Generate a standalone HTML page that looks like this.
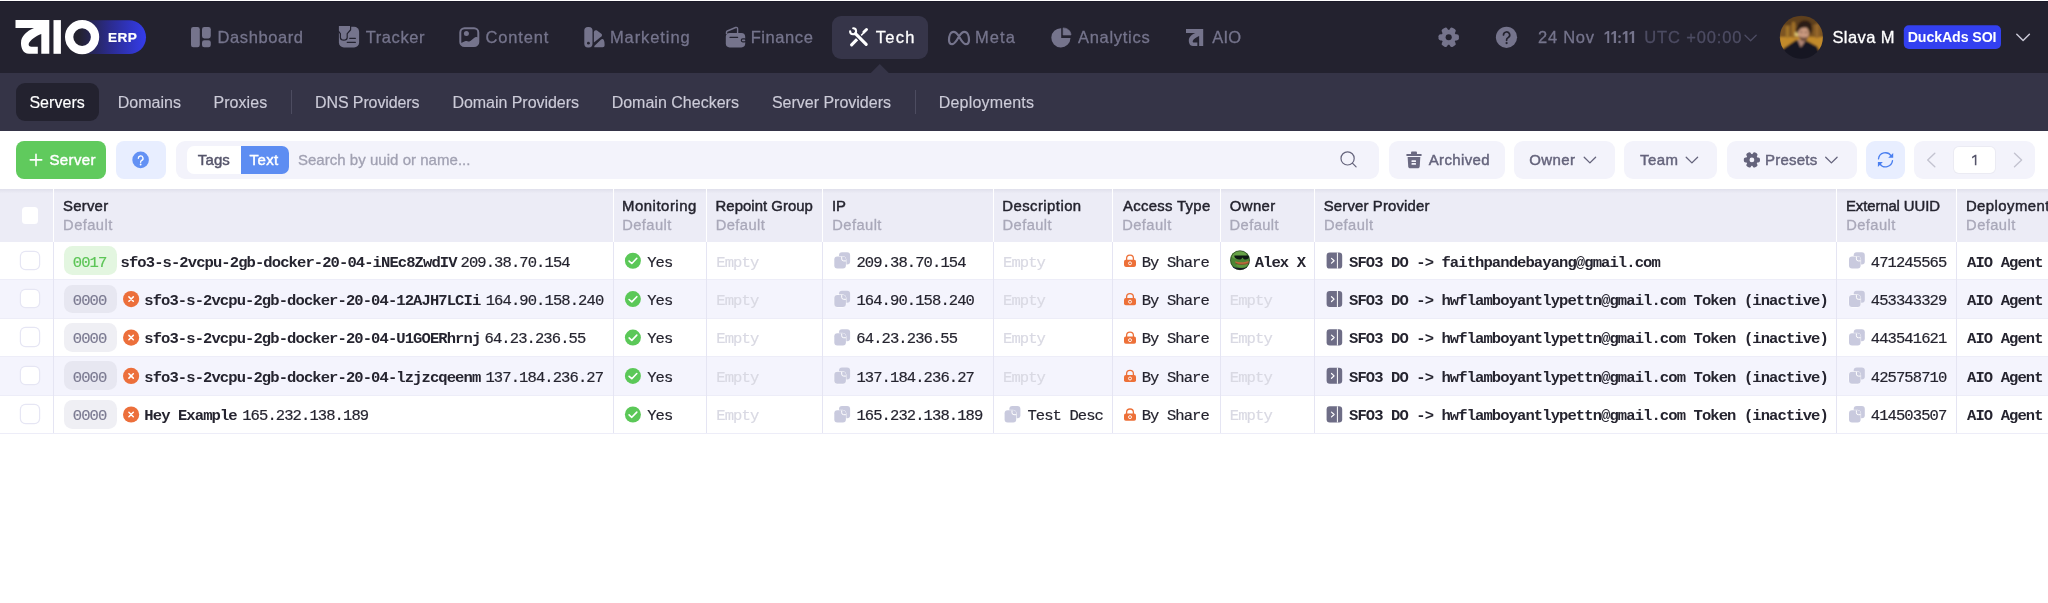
<!DOCTYPE html>
<html><head><meta charset="utf-8"><title>AIO ERP - Servers</title>
<style>
html,body{margin:0;padding:0;background:#fff;overflow:hidden}
#p{position:relative;width:2048px;height:603px;overflow:hidden;background:#fff;font-family:'Liberation Sans', sans-serif;will-change:transform}
#p>div,#p>span,#p>svg{position:absolute}
#p>span{white-space:pre;display:block}
</style></head><body><div id="p">
<div style="left:0px;top:0px;width:2048px;height:73px;background:#23222f;border-radius:0px;"></div>
<div style="left:0px;top:73px;width:2048px;height:57.6px;background:#353447;border-radius:0px;"></div>
<div style="left:0px;top:0px;width:2048px;height:2px;background:linear-gradient(#ffffff 0,#ffffff .75px,#1a1928 1.2px,#1a1928 1.8px,#23222f 2px);border-radius:0px;"></div>
<div style="left:832.2px;top:15.9px;width:95.5px;height:42.7px;background:#363549;border-radius:9px;"></div>
<div style="left:15.9px;top:82.9px;width:83px;height:38.2px;background:#23222f;border-radius:9px;"></div>
<div style="left:291px;top:90px;width:1px;height:24px;background:#4d4c60;border-radius:0px;"></div>
<div style="left:915px;top:90px;width:1px;height:24px;background:#4d4c60;border-radius:0px;"></div>
<div style="left:16px;top:141px;width:89.8px;height:37.8px;background:#60ca5d;border-radius:8px;"></div>
<div style="left:115.6px;top:141px;width:50.4px;height:37.8px;background:#e8eeff;border-radius:8px;"></div>
<div style="left:175.8px;top:141px;width:1203.5px;height:37.8px;background:#f3f3fb;border-radius:9px;"></div>
<div style="left:186.5px;top:145.6px;width:102.5px;height:28.9px;background:#ffffff;border-radius:7px;"></div>
<div style="left:241px;top:145.6px;width:48px;height:28.9px;background:#5d8df2;border-radius:0 7px 7px 0px;"></div>
<div style="left:1389.1px;top:141px;width:115.7px;height:37.8px;background:#f3f3fb;border-radius:9px;"></div>
<div style="left:1514.4px;top:141px;width:100.4px;height:37.8px;background:#f3f3fb;border-radius:9px;"></div>
<div style="left:1624.3px;top:141px;width:92.7px;height:37.8px;background:#f3f3fb;border-radius:9px;"></div>
<div style="left:1726.7px;top:141px;width:130.2px;height:37.8px;background:#f3f3fb;border-radius:9px;"></div>
<div style="left:1866.2px;top:141px;width:38.8px;height:37.8px;background:#e8eeff;border-radius:9px;"></div>
<div style="left:1914.3px;top:141px;width:120.7px;height:37.8px;background:#f3f3fb;border-radius:9px;"></div>
<div style="left:1953.8px;top:146.5px;width:41.3px;height:26.6px;background:#ffffff;border-radius:5px;box-shadow:0 0 0 1px #ebebf3"></div>
<div style="left:0px;top:189px;width:2048px;height:52.7px;background:linear-gradient(#e0e0ec,#ececf6 4.5px);border-radius:0px;"></div>
<div style="left:0px;top:278.8px;width:2048px;height:40.19999999999999px;background:#f4f4fd;border-radius:0px;"></div>
<div style="left:0px;top:355.7px;width:2048px;height:40.0px;background:#f4f4fd;border-radius:0px;"></div>
<div style="left:0px;top:278.7px;width:2048px;height:1.2px;background:#ededf8;border-radius:0px;"></div>
<div style="left:0px;top:317.9px;width:2048px;height:1.2px;background:#ededf8;border-radius:0px;"></div>
<div style="left:0px;top:355.59999999999997px;width:2048px;height:1.2px;background:#ededf8;border-radius:0px;"></div>
<div style="left:0px;top:394.59999999999997px;width:2048px;height:1.2px;background:#ededf8;border-radius:0px;"></div>
<div style="left:0px;top:432.79999999999995px;width:2048px;height:1.2px;background:#ededf8;border-radius:0px;"></div>
<div style="left:52.75px;top:189px;width:1.1px;height:52.7px;background:#ffffff;border-radius:0px;"></div>
<div style="left:52.8px;top:241.7px;width:1.0px;height:191.7px;background:#e5e5f3;border-radius:0px;"></div>
<div style="left:612.5500000000001px;top:189px;width:1.1px;height:52.7px;background:#ffffff;border-radius:0px;"></div>
<div style="left:612.6px;top:241.7px;width:1.0px;height:191.7px;background:#e5e5f3;border-radius:0px;"></div>
<div style="left:705.75px;top:189px;width:1.1px;height:52.7px;background:#ffffff;border-radius:0px;"></div>
<div style="left:705.8px;top:241.7px;width:1.0px;height:191.7px;background:#e5e5f3;border-radius:0px;"></div>
<div style="left:822.35px;top:189px;width:1.1px;height:52.7px;background:#ffffff;border-radius:0px;"></div>
<div style="left:822.4px;top:241.7px;width:1.0px;height:191.7px;background:#e5e5f3;border-radius:0px;"></div>
<div style="left:992.75px;top:189px;width:1.1px;height:52.7px;background:#ffffff;border-radius:0px;"></div>
<div style="left:992.8px;top:241.7px;width:1.0px;height:191.7px;background:#e5e5f3;border-radius:0px;"></div>
<div style="left:1112.25px;top:189px;width:1.1px;height:52.7px;background:#ffffff;border-radius:0px;"></div>
<div style="left:1112.3px;top:241.7px;width:1.0px;height:191.7px;background:#e5e5f3;border-radius:0px;"></div>
<div style="left:1219.55px;top:189px;width:1.1px;height:52.7px;background:#ffffff;border-radius:0px;"></div>
<div style="left:1219.6px;top:241.7px;width:1.0px;height:191.7px;background:#e5e5f3;border-radius:0px;"></div>
<div style="left:1313.95px;top:189px;width:1.1px;height:52.7px;background:#ffffff;border-radius:0px;"></div>
<div style="left:1314.0px;top:241.7px;width:1.0px;height:191.7px;background:#e5e5f3;border-radius:0px;"></div>
<div style="left:1836.15px;top:189px;width:1.1px;height:52.7px;background:#ffffff;border-radius:0px;"></div>
<div style="left:1836.2px;top:241.7px;width:1.0px;height:191.7px;background:#e5e5f3;border-radius:0px;"></div>
<div style="left:1955.8500000000001px;top:189px;width:1.1px;height:52.7px;background:#ffffff;border-radius:0px;"></div>
<div style="left:1955.9px;top:241.7px;width:1.0px;height:191.7px;background:#e5e5f3;border-radius:0px;"></div>
<div style="left:21.9px;top:207px;width:16.4px;height:16.8px;background:#ffffff;border-radius:3.5px;"></div>
<div style="left:21.3px;top:251.52499999999998px;width:17.6px;height:17.6px;background:#ffffff;border-radius:4.5px;box-shadow:0 0 0 1.2px #e6e6f4"></div>
<div style="left:21.3px;top:289.9px;width:17.6px;height:17.6px;background:#ffffff;border-radius:4.5px;box-shadow:0 0 0 1.2px #e6e6f4"></div>
<div style="left:21.3px;top:328.35px;width:17.6px;height:17.6px;background:#ffffff;border-radius:4.5px;box-shadow:0 0 0 1.2px #e6e6f4"></div>
<div style="left:21.3px;top:366.7px;width:17.6px;height:17.6px;background:#ffffff;border-radius:4.5px;box-shadow:0 0 0 1.2px #e6e6f4"></div>
<div style="left:21.3px;top:405.29999999999995px;width:17.6px;height:17.6px;background:#ffffff;border-radius:4.5px;box-shadow:0 0 0 1.2px #e6e6f4"></div>
<div style="left:64.2px;top:246.22499999999997px;width:52.5px;height:28.6px;background:#e3f6e0;border-radius:8.5px;"></div>
<div style="left:64.2px;top:284.59999999999997px;width:52.5px;height:28.6px;background:#e7e7f1;border-radius:8.5px;"></div>
<div style="left:64.2px;top:323.05px;width:52.5px;height:28.6px;background:#efeff4;border-radius:8.5px;"></div>
<div style="left:64.2px;top:361.4px;width:52.5px;height:28.6px;background:#e7e7f1;border-radius:8.5px;"></div>
<div style="left:64.2px;top:399.99999999999994px;width:52.5px;height:28.6px;background:#efeff4;border-radius:8.5px;"></div>
<svg style="left:0;top:0" width="2048" height="603" viewBox="0 0 2048 603" fill="none">
<defs>
<linearGradient id="lg" gradientUnits="userSpaceOnUse" x1="79" y1="0" x2="146" y2="0"><stop offset="0" stop-color="#23222f"/><stop offset=".45" stop-color="#2b2b8c"/><stop offset="1" stop-color="#343ceb"/></linearGradient>
<path id="ag" d="M0 0H33.8V33.7H25.8V13.9C20.5 15.9 14.5 19.9 13.2 23.6C12.8 25.4 14 26.7 16 26.7H22.3V33.7H13.5C7.5 33.7 5.5 27.9 5.5 22.9C5.5 15.9 11.5 10.9 18.5 8H0Z"/>
<g id="cp"><rect x="4.7" y="0" width="11.1" height="12.1" rx="3" fill="#c9cade"/><rect x="0" y="4.2" width="11.6" height="12.1" rx="3" fill="#c9cade" stroke="#fff" stroke-width="1" paint-order="stroke"/><path d="M7.4 4.4v2.2a2 2 0 0 0 2 2h2.2" stroke="#fff" stroke-width="1" fill="none"/></g>
<g id="lk"><path d="M2.6 6.5V4.4a3.4 3.4 0 0 1 6.8 0V6.5" stroke="#ed7038" stroke-width="1.3" fill="none"/><rect x="0" y="5.5" width="12" height="7.2" rx="1.8" fill="#ed7038"/><circle cx="6" cy="9.1" r="1.5" fill="none" stroke="#fff" stroke-width="0.9"/></g>
<g id="pv"><rect x="0" y="0" width="15.6" height="16.1" rx="3.2" fill="#6e6d86"/><rect x="10.3" y="0" width="1" height="16.1" fill="#fff"/><path d="M4.9 5.8l2.6 2.4-2.6 2.4" stroke="#fff" stroke-width="1.2" fill="none" stroke-linecap="round" stroke-linejoin="round"/></g>
<clipPath id="ppc"><circle cx="9.9" cy="9.7" r="9.8"/></clipPath>
<g id="pp"><g clip-path="url(#ppc)"><rect x="0" y="0" width="20" height="20" fill="#4b8634"/><ellipse cx="8.5" cy="4.500" rx="8" ry="4.200" fill="#67a247"/><ellipse cx="13" cy="14.800" rx="7" ry="2.200" fill="#5c9a3e"/><path d="M4.300 5h14.700v1.300c0 1.700-1.700 2.800-3.400 2.800-1.600 0-2.700-.9-3.100-2.100-.5 1.200-1.700 2.100-3.300 2.100-2.100 0-4.300-1.100-4.900-2.800z" fill="#0f1a14"/><path d="M5 10.800c3.800 1.300 8.500 1.300 13.700-.4l.3 2c-3.700 1.900-9.600 2.300-13.400.3z" fill="#ba6a3a"/><path d="M5.500 12.800c3.800 1.700 9.500 1.500 13.300-.5" stroke="#6e3a22" stroke-width=".6" fill="none"/><path d="M0 15.600c6 2.600 13 2.600 20 0v5H0z" fill="#171c28"/><path d="M0 14.500c2 2 4 2.800 6 3.100l-6 3z" fill="#2540d8" opacity=".75"/><path d="M20 14.500c-1.500 2-3 2.800-4.500 3.100l4.500 3z" fill="#2540d8" opacity=".75"/></g><circle cx="9.900" cy="9.700" r="9.500" stroke="#1b2a1c" stroke-width=".7" fill="none" opacity=".85"/></g>
<filter id="bl" x="-10%" y="-10%" width="120%" height="120%"><feGaussianBlur stdDeviation=".8"/></filter><clipPath id="avc"><circle cx="1801.4" cy="37.3" r="21.6"/></clipPath>
<g id="gear"><circle r="7.3" fill="currentColor"/><g fill="currentColor"><rect x="-3.1" y="-10" width="6.2" height="20" rx="2.1" transform="rotate(90)"/><rect x="-3.1" y="-10" width="6.2" height="20" rx="2.1" transform="rotate(30)"/><rect x="-3.1" y="-10" width="6.2" height="20" rx="2.1" transform="rotate(-30)"/></g></g>
</defs>
<!-- logo -->
<rect x="65" y="20.2" width="81" height="33.9" rx="16.950" fill="url(#lg)"/>
<use href="#ag" x="15.5" y="20.1" fill="#fff"/>
<rect x="53.5" y="20.1" width="7.400" height="33.700" fill="#fff"/>
<circle cx="82.100" cy="37.100" r="12.950" stroke="#fff" stroke-width="8.300"/>
<!-- dashboard -->
<g fill="#75748c"><rect x="191" y="27" width="8.800" height="20.200" rx="2.300"/><rect x="202" y="27" width="8.800" height="11.400" rx="2.300"/><rect x="202" y="40.200" width="8.800" height="7" rx="2.300"/></g>
<!-- tracker -->
<rect x="338.900" y="26.800" width="20.200" height="20.600" rx="5" fill="#75748c"/>
<path d="M338.900 25.900H350V29.600L346.600 33.500V37.500C346.600 38.800 345.200 39.600 343.800 39.600C342.400 39.600 341 38.800 341 37.500V33.500L338.900 30.700Z" fill="#75748c" stroke="#23222f" stroke-width="2.400" paint-order="stroke" stroke-linejoin="round"/>
<rect x="338" y="24.500" width="12.500" height="1.400" fill="#23222f"/>
<path d="M349.700 38.300H355.400M347.200 42.300H355.400" stroke="#23222f" stroke-width="1.200" stroke-linecap="round"/>
<!-- content -->
<clipPath id="ctc"><rect x="460.300" y="28.200" width="18" height="17.900" rx="4"/></clipPath>
<path d="M459 44L465.500 41C466.800 40.500 467.800 41.800 469.200 41.600C471 41.300 474 37.500 476 37.100C477 36.900 478 37.600 480 38.500V48H459Z" fill="#75748c" clip-path="url(#ctc)"/>
<rect x="460.300" y="28.200" width="18" height="17.900" rx="4.200" stroke="#75748c" stroke-width="2"/>
<circle cx="466.400" cy="33.400" r="2.500" fill="#75748c"/>
<!-- marketing -->
<rect x="584.300" y="27" width="8.200" height="20.400" rx="3.600" fill="#75748c"/><circle cx="588.400" cy="43.200" r="1.400" fill="#23222f"/>
<path d="M593.900 32.200C593.900 30.300 595.600 29.700 597 30.600L601.300 33.800C602.300 34.600 602.300 35.700 601.400 36.500L593.900 42.600Z" fill="#75748c"/>
<path d="M594.300 47.300V46L600.800 39.700C601.800 38.700 603.200 38.800 603.800 40C604.400 41.300 604.600 42.800 604.600 44.500V45.300C604.600 46.600 603.900 47.300 602.600 47.300Z" fill="#75748c"/>
<!-- finance -->
<rect x="725.800" y="33" width="19.400" height="14.400" rx="3.800" fill="#75748c"/>
<path d="M726.500 34V32.100C726.500 31.600 726.800 31.200 727.300 31L735.600 27.500C736.700 27.100 737.600 27.700 737.600 28.800V34" stroke="#75748c" stroke-width="1.400" fill="none"/>
<path d="M730 37.300H737.600" stroke="#23222f" stroke-width="1.300" stroke-linecap="round"/>
<rect x="741.300" y="38.900" width="4.600" height="2.900" rx="1.450" fill="#75748c" stroke="#23222f" stroke-width="1.200"/>
<!-- tech pointer -->
<path d="M870.800 73L879.800 64L888.800 73Z" fill="#353447"/>
<!-- tech icon -->
<g stroke="#fff" stroke-linecap="round" fill="none">
<path d="M851.600 44.800L857.200 39.200" stroke-width="3.100"/>
<path d="M861.200 35.400L863.600 33" stroke-width="1.500"/>
<path d="M863.900 32L866.500 29.500" stroke-width="3"/>
<path d="M855.800 34L866.300 44.500" stroke="#363549" stroke-width="5.600" stroke-linecap="butt"/>
<path d="M855.500 33.700L866.200 44.400" stroke-width="3.100"/>
<path d="M853.200 28.300A3 3 0 1 1 850.100 31.300" stroke-width="2.100"/>
</g>
<!-- meta -->
<path d="M959 36.500C957 33 955.500 31.800 953.500 31.800C950.500 31.800 949 36 949 40C949 43 950.300 44.200 952.200 44.200C954.500 44.200 956.500 41 959 36.500C961 33 962.500 31.800 964.500 31.800C967.500 31.800 969 36 969 40C969 43 967.700 44.200 965.800 44.200C963.500 44.200 961.500 41 959 36.500Z" stroke="#75748c" stroke-width="2.200"/>
<!-- analytics -->
<path d="M1061.200 28.200A9.600 9.600 0 1 0 1070.500 38H1061.200Z" fill="#75748c"/>
<path d="M1063.100 35V27.900C1067.400 27.900 1071 31 1071 35Z" fill="#75748c" stroke="#75748c" stroke-width=".6" stroke-linejoin="round"/>
<!-- aio -->
<use href="#ag" fill="#75748c" transform="translate(1186 28.900) scale(.509)"/>
<!-- top right -->
<g transform="translate(1448.700 37.300) scale(1.020)" color="#75748c"><use href="#gear"/><circle r="3" fill="#23222f"/></g>
<circle cx="1506.500" cy="37.300" r="10.600" fill="#75748c"/>
<path d="M1503.500 35A3.100 3.100 0 1 1 1508 37.800C1507 38.300 1506.600 38.900 1506.600 39.900V40.300" stroke="#23222f" stroke-width="1.700" stroke-linecap="round"/><circle cx="1506.600" cy="43.100" r="1.150" fill="#23222f"/>
<path d="M1745 35.200L1750.600 40.800L1756.200 35.200" stroke="#4d4c63" stroke-width="1.300" stroke-linecap="round" stroke-linejoin="round"/>
<path d="M2016.800 34.300L2023.100 40.500L2029.400 34.300" stroke="#c9c8d6" stroke-width="1.500" stroke-linecap="round" stroke-linejoin="round"/>
<rect x="1903.800" y="25.300" width="97.200" height="23.700" rx="5" fill="#3340f0"/>
<!-- 11:11 -->
<g fill="#75748c"><path d="M0 31V43H-1.950V33.300L-4.600 34.900V33L-1.600 31Z" transform="translate(1609.2 0)"/><path d="M0 31V43H-2.250V33.500L-4.700 35V32.900L-1.850 31Z" transform="translate(1616.05 0)"/><path d="M0 31V43H-2.250V33.500L-4.700 35V32.900L-1.850 31Z" transform="translate(1627.45 0)"/><path d="M0 31V43H-2.250V33.500L-4.700 35V32.900L-1.850 31Z" transform="translate(1634.15 0)"/><circle cx="1619.500" cy="36.600" r="1.250"/><circle cx="1619.500" cy="41.900" r="1.250"/></g>
<!-- avatar -->
<g clip-path="url(#avc)"><g filter="url(#bl)">
<rect x="1779" y="15" width="45" height="45" fill="#7d5522"/>
<rect x="1779" y="15" width="45" height="10" fill="#5e3f1c"/>
<rect x="1779" y="37" width="45" height="12" fill="#c28a2b"/>
<rect x="1786" y="26" width="3" height="12" fill="#a3762c"/><rect x="1792" y="22" width="3" height="16" fill="#a07028"/><rect x="1815" y="24" width="4" height="14" fill="#94662a"/>
<rect x="1795" y="32" width="8" height="4" fill="#e8d27a"/>
<path d="M1779 52L1783.500 48.400L1796 40L1806.600 40.700L1817.200 46.500L1822 60H1779Z" fill="#191920"/>
<path d="M1797.500 40L1800.800 47.500L1806 40Z" fill="#b08573"/>
<ellipse cx="1803.400" cy="33.600" rx="5.400" ry="7.300" fill="#c9997f"/>
<path d="M1799 36C1800 40 1802 41.300 1804 41.300C1806 41.300 1807.500 39.500 1808.300 36.500C1806 38 1802 38 1799 36Z" fill="#6b4a3a"/>
<path d="M1796.300 31C1796 26 1799 20.500 1805 20.500C1810.500 20.500 1812.800 25 1812.300 29.500C1812 32 1811.500 34 1810.300 35C1809.800 32 1809 29 1806.500 27.500C1803.500 27 1800 28 1798.300 31C1797.800 32 1797.500 33 1797.300 34.500C1796.700 33.500 1796.400 32.500 1796.300 31Z" fill="#2a1c17"/>
<ellipse cx="1801.300" cy="32" rx="1.100" ry=".5" fill="#3a2823"/><ellipse cx="1805.900" cy="32.200" rx="1.100" ry=".5" fill="#3a2823"/>
</g></g>
<!-- toolbar icons -->
<path d="M30.300 159.900H41.700M36 154.200V165.600" stroke="#fff" stroke-width="1.600" stroke-linecap="round"/>
<circle cx="140.600" cy="159.900" r="8.300" fill="#6391f4"/>
<path d="M138.300 158.300A2.350 2.350 0 1 1 141.700 160.400C140.900 160.800 140.650 161.200 140.650 162V162.200" stroke="#fff" stroke-width="1.350" stroke-linecap="round"/><circle cx="140.650" cy="164.500" r=".9" fill="#fff"/>
<circle cx="1347.600" cy="158.400" r="6.600" stroke="#65647c" stroke-width="1.200"/><path d="M1352.400 163.200L1356.100 166.900" stroke="#65647c" stroke-width="1.200" stroke-linecap="round"/>
<!-- trash -->
<g fill="#6a6981"><rect x="1411" y="151.600" width="6" height="3" rx="1"/><rect x="1406.200" y="153.900" width="15.600" height="2.100" rx="1"/><path d="M1407.600 157H1420.300L1419.700 166.400C1419.600 167.500 1418.800 168.200 1417.700 168.200H1410.200C1409.100 168.200 1408.300 167.500 1408.200 166.400Z"/></g>
<rect x="1411.500" y="160.200" width="4.500" height="1.700" rx=".5" fill="#f3f3fb"/><rect x="1411.500" y="163.100" width="4.500" height="1.700" rx=".5" fill="#f3f3fb"/>
<g stroke="#65647c" stroke-width="1.300" stroke-linecap="round" stroke-linejoin="round"><path d="M1584.200 157.200L1589.900 162.900L1595.600 157.200"/><path d="M1686.200 157.200L1691.900 162.900L1697.600 157.200"/><path d="M1825.700 157.200L1831.400 162.900L1837.100 157.200"/></g>
<g transform="translate(1751.900 159.900) scale(.805)" color="#65647c"><use href="#gear"/><circle r="3" fill="#f3f3fb"/></g>
<path d="M1976.400 154.800V165.200H1974.850V156.700L1972.100 158.400V156.800L1975.100 154.800Z" fill="#55546a"/>
<!-- refresh -->
<g stroke="#4a7ff0" stroke-width="1.300" stroke-linecap="round"><path d="M1878.500 158.900A7 7 0 0 1 1891.200 155.800M1892.500 160.700A7 7 0 0 1 1879.800 163.800"/></g>
<path d="M1893.200 152.900V157.800H1888.200ZM1877.900 166.900V162H1882.900Z" fill="#4a7ff0"/>
<g stroke="#c3c3d0" stroke-width="1.400" stroke-linecap="round" stroke-linejoin="round"><path d="M1934.800 153.200L1927.700 160L1934.800 166.800"/><path d="M2014.500 153.200L2021.600 160L2014.500 166.800"/></g>

<circle cx="632.9" cy="260.72" r="8" fill="#5bc858"/><path d="M629.1 261.12l2.7 2.4 5-5.2" fill="none" stroke="#fff" stroke-width="1.6" stroke-linecap="round" stroke-linejoin="round"/>
<use href="#cp" x="834.3" y="252.32"/>
<use href="#lk" x="1124" y="254.22"/>
<use href="#pp" x="1230.1" y="250.52"/>
<use href="#pv" x="1326.6" y="252.52"/>
<use href="#cp" x="1849" y="252.32"/>
<circle cx="131.1" cy="299.10" r="8.1" fill="#ec6f3b"/><path d="M128.9 296.90l4.4 4.4m0 -4.4l-4.4 4.4" stroke="#fff" stroke-width="1.5" stroke-linecap="round"/>
<circle cx="632.9" cy="299.10" r="8" fill="#5bc858"/><path d="M629.1 299.50l2.7 2.4 5-5.2" fill="none" stroke="#fff" stroke-width="1.6" stroke-linecap="round" stroke-linejoin="round"/>
<use href="#cp" x="834.3" y="290.70"/>
<use href="#lk" x="1124" y="292.60"/>
<use href="#pv" x="1326.6" y="290.90"/>
<use href="#cp" x="1849" y="290.70"/>
<circle cx="131.1" cy="337.55" r="8.1" fill="#ec6f3b"/><path d="M128.9 335.35l4.4 4.4m0 -4.4l-4.4 4.4" stroke="#fff" stroke-width="1.5" stroke-linecap="round"/>
<circle cx="632.9" cy="337.55" r="8" fill="#5bc858"/><path d="M629.1 337.95l2.7 2.4 5-5.2" fill="none" stroke="#fff" stroke-width="1.6" stroke-linecap="round" stroke-linejoin="round"/>
<use href="#cp" x="834.3" y="329.15"/>
<use href="#lk" x="1124" y="331.05"/>
<use href="#pv" x="1326.6" y="329.35"/>
<use href="#cp" x="1849" y="329.15"/>
<circle cx="131.1" cy="375.90" r="8.1" fill="#ec6f3b"/><path d="M128.9 373.70l4.4 4.4m0 -4.4l-4.4 4.4" stroke="#fff" stroke-width="1.5" stroke-linecap="round"/>
<circle cx="632.9" cy="375.90" r="8" fill="#5bc858"/><path d="M629.1 376.30l2.7 2.4 5-5.2" fill="none" stroke="#fff" stroke-width="1.6" stroke-linecap="round" stroke-linejoin="round"/>
<use href="#cp" x="834.3" y="367.50"/>
<use href="#lk" x="1124" y="369.40"/>
<use href="#pv" x="1326.6" y="367.70"/>
<use href="#cp" x="1849" y="367.50"/>
<circle cx="131.1" cy="414.50" r="8.1" fill="#ec6f3b"/><path d="M128.9 412.30l4.4 4.4m0 -4.4l-4.4 4.4" stroke="#fff" stroke-width="1.5" stroke-linecap="round"/>
<circle cx="632.9" cy="414.50" r="8" fill="#5bc858"/><path d="M629.1 414.90l2.7 2.4 5-5.2" fill="none" stroke="#fff" stroke-width="1.6" stroke-linecap="round" stroke-linejoin="round"/>
<use href="#cp" x="834.3" y="406.10"/>
<use href="#cp" x="1004.6" y="406.10"/>
<use href="#lk" x="1124" y="408.00"/>
<use href="#pv" x="1326.6" y="406.30"/>
<use href="#cp" x="1849" y="406.10"/>
</svg>
<span id="t0" style="left:217.59px;top:29.00px;font:400 16.5px/1 'Liberation Sans', sans-serif;color:#75748c;letter-spacing:0.583px;-webkit-text-stroke:0.3px #75748c">Dashboard</span>
<span id="t1" style="left:365.78px;top:29.00px;font:400 16.5px/1 'Liberation Sans', sans-serif;color:#75748c;letter-spacing:0.559px;-webkit-text-stroke:0.3px #75748c">Tracker</span>
<span id="t2" style="left:485.62px;top:29.00px;font:400 16.5px/1 'Liberation Sans', sans-serif;color:#75748c;letter-spacing:0.832px;-webkit-text-stroke:0.3px #75748c">Content</span>
<span id="t3" style="left:609.89px;top:29.00px;font:400 16.5px/1 'Liberation Sans', sans-serif;color:#75748c;letter-spacing:0.923px;-webkit-text-stroke:0.3px #75748c">Marketing</span>
<span id="t4" style="left:750.69px;top:29.00px;font:400 16.5px/1 'Liberation Sans', sans-serif;color:#75748c;letter-spacing:0.571px;-webkit-text-stroke:0.3px #75748c">Finance</span>
<span id="t5" style="left:875.78px;top:29.00px;font:400 16.5px/1 'Liberation Sans', sans-serif;color:#ffffff;letter-spacing:1.293px;-webkit-text-stroke:0.3px #ffffff">Tech</span>
<span id="t6" style="left:975.09px;top:29.00px;font:400 16.5px/1 'Liberation Sans', sans-serif;color:#75748c;letter-spacing:1.014px;-webkit-text-stroke:0.3px #75748c">Meta</span>
<span id="t7" style="left:1077.98px;top:29.00px;font:400 16.5px/1 'Liberation Sans', sans-serif;color:#75748c;letter-spacing:0.705px;-webkit-text-stroke:0.3px #75748c">Analytics</span>
<span id="t8" style="left:1212.28px;top:29.00px;font:400 16.5px/1 'Liberation Sans', sans-serif;color:#75748c;letter-spacing:0.169px;-webkit-text-stroke:0.3px #75748c">AIO</span>
<span id="t9" style="left:1537.95px;top:29.00px;font:400 16.5px/1 'Liberation Sans', sans-serif;color:#75748c;letter-spacing:0.771px;-webkit-text-stroke:0.3px #75748c">24 Nov</span>
<span id="t10" style="left:1644.17px;top:29.00px;font:400 16.5px/1 'Liberation Sans', sans-serif;color:#4d4c63;letter-spacing:0.871px;-webkit-text-stroke:0.3px #4d4c63">UTC +00:00</span>
<span id="t11" style="left:1832.46px;top:29.00px;font:400 16.5px/1 'Liberation Sans', sans-serif;color:#ffffff;letter-spacing:0.411px;-webkit-text-stroke:0.3px #ffffff">Slava M</span>
<span id="t12" style="left:1907.68px;top:30.00px;font:700 14.2px/1 'Liberation Sans', sans-serif;color:#ffffff;letter-spacing:-0.101px">DuckAds SOI</span>
<span id="t13" style="left:107.66px;top:32.00px;font:700 12.6px/1 'Liberation Sans', sans-serif;color:#ffffff;letter-spacing:0.350px;-webkit-text-stroke:0.2px #ffffff;transform:scaleX(1.0816);transform-origin:0 0">ERP</span>
<span id="t14" style="left:29.38px;top:95.00px;font:400 16px/1 'Liberation Sans', sans-serif;color:#ffffff;letter-spacing:0.054px;-webkit-text-stroke:0.15px #ffffff">Servers</span>
<span id="t15" style="left:117.64px;top:95.00px;font:400 16px/1 'Liberation Sans', sans-serif;color:#cccbd8;letter-spacing:0.026px;-webkit-text-stroke:0.15px #cccbd8">Domains</span>
<span id="t16" style="left:213.54px;top:95.00px;font:400 16px/1 'Liberation Sans', sans-serif;color:#cccbd8;letter-spacing:0.043px;-webkit-text-stroke:0.15px #cccbd8">Proxies</span>
<span id="t17" style="left:315.04px;top:95.00px;font:400 16px/1 'Liberation Sans', sans-serif;color:#cccbd8;letter-spacing:-0.110px;-webkit-text-stroke:0.15px #cccbd8">DNS Providers</span>
<span id="t18" style="left:452.44px;top:95.00px;font:400 16px/1 'Liberation Sans', sans-serif;color:#cccbd8;letter-spacing:-0.043px;-webkit-text-stroke:0.15px #cccbd8">Domain Providers</span>
<span id="t19" style="left:611.64px;top:95.00px;font:400 16px/1 'Liberation Sans', sans-serif;color:#cccbd8;letter-spacing:0.011px;-webkit-text-stroke:0.15px #cccbd8">Domain Checkers</span>
<span id="t20" style="left:771.88px;top:95.00px;font:400 16px/1 'Liberation Sans', sans-serif;color:#cccbd8;letter-spacing:-0.005px;-webkit-text-stroke:0.15px #cccbd8">Server Providers</span>
<span id="t21" style="left:938.84px;top:95.00px;font:400 16px/1 'Liberation Sans', sans-serif;color:#cccbd8;letter-spacing:0.171px;-webkit-text-stroke:0.15px #cccbd8">Deployments</span>
<span id="t22" style="left:49.41px;top:152.00px;font:400 15px/1 'Liberation Sans', sans-serif;color:#ffffff;letter-spacing:0.378px;-webkit-text-stroke:0.45px #ffffff">Server</span>
<span id="t23" style="left:197.81px;top:152.00px;font:400 15px/1 'Liberation Sans', sans-serif;color:#55546a;letter-spacing:0.131px;-webkit-text-stroke:0.45px #55546a">Tags</span>
<span id="t24" style="left:249.61px;top:152.00px;font:400 15px/1 'Liberation Sans', sans-serif;color:#ffffff;letter-spacing:0.378px;-webkit-text-stroke:0.45px #ffffff">Text</span>
<span id="t25" style="left:297.91px;top:152.00px;font:400 15px/1 'Liberation Sans', sans-serif;color:#a1a1b2;letter-spacing:0.033px;-webkit-text-stroke:0.3px #a1a1b2">Search by uuid or name...</span>
<span id="t26" style="left:1428.78px;top:152.00px;font:400 15px/1 'Liberation Sans', sans-serif;color:#65647c;letter-spacing:0.354px;-webkit-text-stroke:0.45px #65647c">Archived</span>
<span id="t27" style="left:1529.27px;top:152.00px;font:400 15px/1 'Liberation Sans', sans-serif;color:#65647c;letter-spacing:0.358px;-webkit-text-stroke:0.45px #65647c">Owner</span>
<span id="t28" style="left:1640.01px;top:152.00px;font:400 15px/1 'Liberation Sans', sans-serif;color:#65647c;letter-spacing:0.405px;-webkit-text-stroke:0.45px #65647c">Team</span>
<span id="t29" style="left:1765.10px;top:152.00px;font:400 15px/1 'Liberation Sans', sans-serif;color:#65647c;letter-spacing:0.201px;-webkit-text-stroke:0.45px #65647c">Presets</span>
<span id="t30" style="left:62.95px;top:199.00px;font:400 14.9px/1 'Liberation Sans', sans-serif;color:#25242f;letter-spacing:0.263px;-webkit-text-stroke:0.45px #25242f">Server</span>
<span id="t31" style="left:63.11px;top:218.00px;font:400 14.7px/1 'Liberation Sans', sans-serif;color:#a9a8b9;letter-spacing:0.435px;-webkit-text-stroke:0.3px #a9a8b9">Default</span>
<span id="t32" style="left:622.01px;top:199.00px;font:400 14.9px/1 'Liberation Sans', sans-serif;color:#25242f;letter-spacing:0.531px;-webkit-text-stroke:0.45px #25242f">Monitoring</span>
<span id="t33" style="left:622.21px;top:218.00px;font:400 14.7px/1 'Liberation Sans', sans-serif;color:#a9a8b9;letter-spacing:0.435px;-webkit-text-stroke:0.3px #a9a8b9">Default</span>
<span id="t34" style="left:715.51px;top:199.00px;font:400 14.9px/1 'Liberation Sans', sans-serif;color:#25242f;letter-spacing:0.045px;-webkit-text-stroke:0.45px #25242f">Repoint Group</span>
<span id="t35" style="left:715.71px;top:218.00px;font:400 14.7px/1 'Liberation Sans', sans-serif;color:#a9a8b9;letter-spacing:0.435px;-webkit-text-stroke:0.3px #a9a8b9">Default</span>
<span id="t36" style="left:831.98px;top:199.00px;font:400 14.9px/1 'Liberation Sans', sans-serif;color:#25242f;letter-spacing:-0.104px;-webkit-text-stroke:0.45px #25242f">IP</span>
<span id="t37" style="left:832.31px;top:218.00px;font:400 14.7px/1 'Liberation Sans', sans-serif;color:#a9a8b9;letter-spacing:0.435px;-webkit-text-stroke:0.3px #a9a8b9">Default</span>
<span id="t38" style="left:1002.31px;top:199.00px;font:400 14.9px/1 'Liberation Sans', sans-serif;color:#25242f;letter-spacing:0.435px;-webkit-text-stroke:0.45px #25242f">Description</span>
<span id="t39" style="left:1002.51px;top:218.00px;font:400 14.7px/1 'Liberation Sans', sans-serif;color:#a9a8b9;letter-spacing:0.435px;-webkit-text-stroke:0.3px #a9a8b9">Default</span>
<span id="t40" style="left:1122.98px;top:199.00px;font:400 14.9px/1 'Liberation Sans', sans-serif;color:#25242f;letter-spacing:0.307px;-webkit-text-stroke:0.45px #25242f">Access Type</span>
<span id="t41" style="left:1122.21px;top:218.00px;font:400 14.7px/1 'Liberation Sans', sans-serif;color:#a9a8b9;letter-spacing:0.435px;-webkit-text-stroke:0.3px #a9a8b9">Default</span>
<span id="t42" style="left:1229.87px;top:199.00px;font:400 14.9px/1 'Liberation Sans', sans-serif;color:#25242f;letter-spacing:0.348px;-webkit-text-stroke:0.45px #25242f">Owner</span>
<span id="t43" style="left:1229.51px;top:218.00px;font:400 14.7px/1 'Liberation Sans', sans-serif;color:#a9a8b9;letter-spacing:0.435px;-webkit-text-stroke:0.3px #a9a8b9">Default</span>
<span id="t44" style="left:1323.75px;top:199.00px;font:400 14.9px/1 'Liberation Sans', sans-serif;color:#25242f;letter-spacing:0.160px;-webkit-text-stroke:0.45px #25242f">Server Provider</span>
<span id="t45" style="left:1323.91px;top:218.00px;font:400 14.7px/1 'Liberation Sans', sans-serif;color:#a9a8b9;letter-spacing:0.435px;-webkit-text-stroke:0.3px #a9a8b9">Default</span>
<span id="t46" style="left:1846.01px;top:199.00px;font:400 14.9px/1 'Liberation Sans', sans-serif;color:#25242f;letter-spacing:-0.100px;-webkit-text-stroke:0.45px #25242f">External UUID</span>
<span id="t47" style="left:1846.21px;top:218.00px;font:400 14.7px/1 'Liberation Sans', sans-serif;color:#a9a8b9;letter-spacing:0.435px;-webkit-text-stroke:0.3px #a9a8b9">Default</span>
<span id="t48" style="left:1965.91px;top:199.00px;font:400 14.9px/1 'Liberation Sans', sans-serif;color:#25242f;letter-spacing:0.452px;-webkit-text-stroke:0.45px #25242f">Deployment</span>
<span id="t49" style="left:1966.11px;top:218.00px;font:400 14.7px/1 'Liberation Sans', sans-serif;color:#a9a8b9;letter-spacing:0.435px;-webkit-text-stroke:0.3px #a9a8b9">Default</span>
<span id="t50" style="left:72.75px;top:256.00px;font:400 15.5px/1 'Liberation Mono', monospace;color:#5cc556;letter-spacing:-0.900px;-webkit-text-stroke:0.2px #5cc556">0017</span>
<span id="t51" style="left:120.56px;top:256.00px;font:700 15.5px/1 'Liberation Mono', monospace;color:#25242f;letter-spacing:-0.900px">sfo3-s-2vcpu-2gb-docker-20-04-iNEc8ZwdIV</span>
<span id="t52" style="left:460.49px;top:256.00px;font:400 15.5px/1 'Liberation Mono', monospace;color:#25242f;letter-spacing:-0.900px;-webkit-text-stroke:0.2px #25242f">209.38.70.154</span>
<span id="t53" style="left:647.20px;top:256.00px;font:400 15.5px/1 'Liberation Mono', monospace;color:#25242f;letter-spacing:-0.900px;-webkit-text-stroke:0.2px #25242f">Yes</span>
<span id="t54" style="left:716.31px;top:256.00px;font:400 15.5px/1 'Liberation Mono', monospace;color:#d9d9e3;letter-spacing:-0.900px;-webkit-text-stroke:0.2px #d9d9e3">Empty</span>
<span id="t55" style="left:856.39px;top:256.00px;font:400 15.5px/1 'Liberation Mono', monospace;color:#25242f;letter-spacing:-0.900px;-webkit-text-stroke:0.2px #25242f">209.38.70.154</span>
<span id="t56" style="left:1003.01px;top:256.00px;font:400 15.5px/1 'Liberation Mono', monospace;color:#d9d9e3;letter-spacing:-0.900px;-webkit-text-stroke:0.2px #d9d9e3">Empty</span>
<span id="t57" style="left:1141.71px;top:256.00px;font:400 15.5px/1 'Liberation Mono', monospace;color:#25242f;letter-spacing:-0.900px;-webkit-text-stroke:0.2px #25242f">By Share</span>
<span id="t58" style="left:1254.65px;top:256.00px;font:700 15.5px/1 'Liberation Mono', monospace;color:#25242f;letter-spacing:-0.900px">Alex X</span>
<span id="t59" style="left:1349.02px;top:256.00px;font:700 15.5px/1 'Liberation Mono', monospace;color:#25242f;letter-spacing:-0.900px">SFO3 DO -&gt; faithpandebayang@gmail.com</span>
<span id="t60" style="left:1870.76px;top:256.00px;font:400 15.5px/1 'Liberation Mono', monospace;color:#25242f;letter-spacing:-0.900px;-webkit-text-stroke:0.2px #25242f">471245565</span>
<span id="t61" style="left:1967.05px;top:256.00px;font:700 15.5px/1 'Liberation Mono', monospace;color:#25242f;letter-spacing:-0.900px">AIO Agent</span>
<span id="t62" style="left:72.75px;top:294.00px;font:400 15.5px/1 'Liberation Mono', monospace;color:#7c7b92;letter-spacing:-0.900px;-webkit-text-stroke:0.2px #7c7b92">0000</span>
<span id="t63" style="left:144.26px;top:294.00px;font:700 15.5px/1 'Liberation Mono', monospace;color:#25242f;letter-spacing:-0.900px">sfo3-s-2vcpu-2gb-docker-20-04-12AJH7LCIi</span>
<span id="t64" style="left:485.68px;top:294.00px;font:400 15.5px/1 'Liberation Mono', monospace;color:#25242f;letter-spacing:-0.900px;-webkit-text-stroke:0.2px #25242f">164.90.158.240</span>
<span id="t65" style="left:647.20px;top:294.00px;font:400 15.5px/1 'Liberation Mono', monospace;color:#25242f;letter-spacing:-0.900px;-webkit-text-stroke:0.2px #25242f">Yes</span>
<span id="t66" style="left:716.31px;top:294.00px;font:400 15.5px/1 'Liberation Mono', monospace;color:#d9d9e3;letter-spacing:-0.900px;-webkit-text-stroke:0.2px #d9d9e3">Empty</span>
<span id="t67" style="left:856.38px;top:294.00px;font:400 15.5px/1 'Liberation Mono', monospace;color:#25242f;letter-spacing:-0.900px;-webkit-text-stroke:0.2px #25242f">164.90.158.240</span>
<span id="t68" style="left:1003.01px;top:294.00px;font:400 15.5px/1 'Liberation Mono', monospace;color:#d9d9e3;letter-spacing:-0.900px;-webkit-text-stroke:0.2px #d9d9e3">Empty</span>
<span id="t69" style="left:1141.71px;top:294.00px;font:400 15.5px/1 'Liberation Mono', monospace;color:#25242f;letter-spacing:-0.900px;-webkit-text-stroke:0.2px #25242f">By Share</span>
<span id="t70" style="left:1229.81px;top:294.00px;font:400 15.5px/1 'Liberation Mono', monospace;color:#d9d9e3;letter-spacing:-0.900px;-webkit-text-stroke:0.2px #d9d9e3">Empty</span>
<span id="t71" style="left:1349.02px;top:294.00px;font:700 15.5px/1 'Liberation Mono', monospace;color:#25242f;letter-spacing:-0.900px">SFO3 DO -&gt; hwflamboyantlypettn@gmail.com Token (inactive)</span>
<span id="t72" style="left:1870.76px;top:294.00px;font:400 15.5px/1 'Liberation Mono', monospace;color:#25242f;letter-spacing:-0.900px;-webkit-text-stroke:0.2px #25242f">453343329</span>
<span id="t73" style="left:1967.05px;top:294.00px;font:700 15.5px/1 'Liberation Mono', monospace;color:#25242f;letter-spacing:-0.900px">AIO Agent</span>
<span id="t74" style="left:72.75px;top:332.00px;font:400 15.5px/1 'Liberation Mono', monospace;color:#7c7b92;letter-spacing:-0.900px;-webkit-text-stroke:0.2px #7c7b92">0000</span>
<span id="t75" style="left:144.26px;top:332.00px;font:700 15.5px/1 'Liberation Mono', monospace;color:#25242f;letter-spacing:-0.900px">sfo3-s-2vcpu-2gb-docker-20-04-U1GOERhrnj</span>
<span id="t76" style="left:484.55px;top:332.00px;font:400 15.5px/1 'Liberation Mono', monospace;color:#25242f;letter-spacing:-0.900px;-webkit-text-stroke:0.2px #25242f">64.23.236.55</span>
<span id="t77" style="left:647.20px;top:332.00px;font:400 15.5px/1 'Liberation Mono', monospace;color:#25242f;letter-spacing:-0.900px;-webkit-text-stroke:0.2px #25242f">Yes</span>
<span id="t78" style="left:716.31px;top:332.00px;font:400 15.5px/1 'Liberation Mono', monospace;color:#d9d9e3;letter-spacing:-0.900px;-webkit-text-stroke:0.2px #d9d9e3">Empty</span>
<span id="t79" style="left:856.35px;top:332.00px;font:400 15.5px/1 'Liberation Mono', monospace;color:#25242f;letter-spacing:-0.900px;-webkit-text-stroke:0.2px #25242f">64.23.236.55</span>
<span id="t80" style="left:1003.01px;top:332.00px;font:400 15.5px/1 'Liberation Mono', monospace;color:#d9d9e3;letter-spacing:-0.900px;-webkit-text-stroke:0.2px #d9d9e3">Empty</span>
<span id="t81" style="left:1141.71px;top:332.00px;font:400 15.5px/1 'Liberation Mono', monospace;color:#25242f;letter-spacing:-0.900px;-webkit-text-stroke:0.2px #25242f">By Share</span>
<span id="t82" style="left:1229.81px;top:332.00px;font:400 15.5px/1 'Liberation Mono', monospace;color:#d9d9e3;letter-spacing:-0.900px;-webkit-text-stroke:0.2px #d9d9e3">Empty</span>
<span id="t83" style="left:1349.02px;top:332.00px;font:700 15.5px/1 'Liberation Mono', monospace;color:#25242f;letter-spacing:-0.900px">SFO3 DO -&gt; hwflamboyantlypettn@gmail.com Token (inactive)</span>
<span id="t84" style="left:1870.76px;top:332.00px;font:400 15.5px/1 'Liberation Mono', monospace;color:#25242f;letter-spacing:-0.900px;-webkit-text-stroke:0.2px #25242f">443541621</span>
<span id="t85" style="left:1967.05px;top:332.00px;font:700 15.5px/1 'Liberation Mono', monospace;color:#25242f;letter-spacing:-0.900px">AIO Agent</span>
<span id="t86" style="left:72.75px;top:371.00px;font:400 15.5px/1 'Liberation Mono', monospace;color:#7c7b92;letter-spacing:-0.900px;-webkit-text-stroke:0.2px #7c7b92">0000</span>
<span id="t87" style="left:144.26px;top:371.00px;font:700 15.5px/1 'Liberation Mono', monospace;color:#25242f;letter-spacing:-0.900px">sfo3-s-2vcpu-2gb-docker-20-04-lzjzcqeenm</span>
<span id="t88" style="left:485.48px;top:371.00px;font:400 15.5px/1 'Liberation Mono', monospace;color:#25242f;letter-spacing:-0.900px;-webkit-text-stroke:0.2px #25242f">137.184.236.27</span>
<span id="t89" style="left:647.20px;top:371.00px;font:400 15.5px/1 'Liberation Mono', monospace;color:#25242f;letter-spacing:-0.900px;-webkit-text-stroke:0.2px #25242f">Yes</span>
<span id="t90" style="left:716.31px;top:371.00px;font:400 15.5px/1 'Liberation Mono', monospace;color:#d9d9e3;letter-spacing:-0.900px;-webkit-text-stroke:0.2px #d9d9e3">Empty</span>
<span id="t91" style="left:856.38px;top:371.00px;font:400 15.5px/1 'Liberation Mono', monospace;color:#25242f;letter-spacing:-0.900px;-webkit-text-stroke:0.2px #25242f">137.184.236.27</span>
<span id="t92" style="left:1003.01px;top:371.00px;font:400 15.5px/1 'Liberation Mono', monospace;color:#d9d9e3;letter-spacing:-0.900px;-webkit-text-stroke:0.2px #d9d9e3">Empty</span>
<span id="t93" style="left:1141.71px;top:371.00px;font:400 15.5px/1 'Liberation Mono', monospace;color:#25242f;letter-spacing:-0.900px;-webkit-text-stroke:0.2px #25242f">By Share</span>
<span id="t94" style="left:1229.81px;top:371.00px;font:400 15.5px/1 'Liberation Mono', monospace;color:#d9d9e3;letter-spacing:-0.900px;-webkit-text-stroke:0.2px #d9d9e3">Empty</span>
<span id="t95" style="left:1349.02px;top:371.00px;font:700 15.5px/1 'Liberation Mono', monospace;color:#25242f;letter-spacing:-0.900px">SFO3 DO -&gt; hwflamboyantlypettn@gmail.com Token (inactive)</span>
<span id="t96" style="left:1870.76px;top:371.00px;font:400 15.5px/1 'Liberation Mono', monospace;color:#25242f;letter-spacing:-0.900px;-webkit-text-stroke:0.2px #25242f">425758710</span>
<span id="t97" style="left:1967.05px;top:371.00px;font:700 15.5px/1 'Liberation Mono', monospace;color:#25242f;letter-spacing:-0.900px">AIO Agent</span>
<span id="t98" style="left:72.75px;top:409.00px;font:400 15.5px/1 'Liberation Mono', monospace;color:#7c7b92;letter-spacing:-0.900px;-webkit-text-stroke:0.2px #7c7b92">0000</span>
<span id="t99" style="left:144.34px;top:409.00px;font:700 15.5px/1 'Liberation Mono', monospace;color:#25242f;letter-spacing:-0.900px">Hey Example</span>
<span id="t100" style="left:242.18px;top:409.00px;font:400 15.5px/1 'Liberation Mono', monospace;color:#25242f;letter-spacing:-0.900px;-webkit-text-stroke:0.2px #25242f">165.232.138.189</span>
<span id="t101" style="left:647.20px;top:409.00px;font:400 15.5px/1 'Liberation Mono', monospace;color:#25242f;letter-spacing:-0.900px;-webkit-text-stroke:0.2px #25242f">Yes</span>
<span id="t102" style="left:716.31px;top:409.00px;font:400 15.5px/1 'Liberation Mono', monospace;color:#d9d9e3;letter-spacing:-0.900px;-webkit-text-stroke:0.2px #d9d9e3">Empty</span>
<span id="t103" style="left:856.38px;top:409.00px;font:400 15.5px/1 'Liberation Mono', monospace;color:#25242f;letter-spacing:-0.900px;-webkit-text-stroke:0.2px #25242f">165.232.138.189</span>
<span id="t104" style="left:1027.39px;top:409.00px;font:400 15.5px/1 'Liberation Mono', monospace;color:#25242f;letter-spacing:-0.900px;-webkit-text-stroke:0.2px #25242f">Test Desc</span>
<span id="t105" style="left:1141.71px;top:409.00px;font:400 15.5px/1 'Liberation Mono', monospace;color:#25242f;letter-spacing:-0.900px;-webkit-text-stroke:0.2px #25242f">By Share</span>
<span id="t106" style="left:1229.81px;top:409.00px;font:400 15.5px/1 'Liberation Mono', monospace;color:#d9d9e3;letter-spacing:-0.900px;-webkit-text-stroke:0.2px #d9d9e3">Empty</span>
<span id="t107" style="left:1349.02px;top:409.00px;font:700 15.5px/1 'Liberation Mono', monospace;color:#25242f;letter-spacing:-0.900px">SFO3 DO -&gt; hwflamboyantlypettn@gmail.com Token (inactive)</span>
<span id="t108" style="left:1870.76px;top:409.00px;font:400 15.5px/1 'Liberation Mono', monospace;color:#25242f;letter-spacing:-0.900px;-webkit-text-stroke:0.2px #25242f">414503507</span>
<span id="t109" style="left:1967.05px;top:409.00px;font:700 15.5px/1 'Liberation Mono', monospace;color:#25242f;letter-spacing:-0.900px">AIO Agent</span>
</div></body></html>
